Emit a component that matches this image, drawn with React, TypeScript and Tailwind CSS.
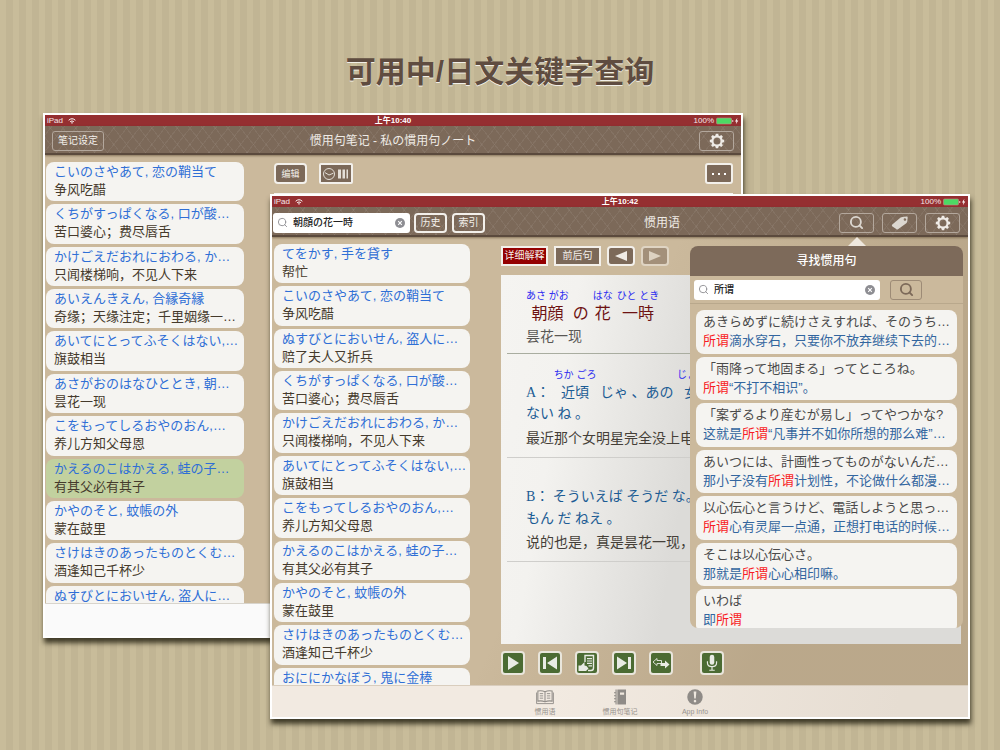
import { FC, ReactNode } from "react"
import clsx from "clsx"
import { Search } from "lucide-react"

const JP = "[font-family:'Liberation_Sans','Noto_Sans_CJK_JP',sans-serif]"
const SC = "[font-family:'Liberation_Sans','Noto_Sans_CJK_SC',sans-serif]"
const SERIF = "[font-family:'Liberation_Serif','Noto_Sans_CJK_JP',serif]"
const KEYWORD = "所谓"

type Idiom = { ja: string; zh: string; selected?: boolean }

const notes: Idiom[] = [
  { ja: "こいのさやあて, 恋の鞘当て", zh: "争风吃醋" },
  { ja: "くちがすっぱくなる, 口が酸…", zh: "苦口婆心；费尽唇舌" },
  { ja: "かけごえだおれにおわる, か…", zh: "只闻楼梯响，不见人下来" },
  { ja: "あいえんきえん, 合縁奇縁", zh: "奇缘；天缘注定；千里姻缘一…" },
  { ja: "あいてにとってふそくはない,…", zh: "旗鼓相当" },
  { ja: "あさがおのはなひととき, 朝…", zh: "昙花一现" },
  { ja: "こをもってしるおやのおん,…", zh: "养儿方知父母恩" },
  { ja: "かえるのこはかえる, 蛙の子…", zh: "有其父必有其子", selected: true },
  { ja: "かやのそと, 蚊帳の外", zh: "蒙在鼓里" },
  { ja: "さけはきのあったものとくむ…", zh: "酒逢知己千杯少" },
  { ja: "ぬすびとにおいせん, 盗人に…", zh: "" },
]

const idioms: Idiom[] = [
  { ja: "てをかす, 手を貸す", zh: "帮忙" },
  { ja: "こいのさやあて, 恋の鞘当て", zh: "争风吃醋" },
  { ja: "ぬすびとにおいせん, 盗人に…", zh: "赔了夫人又折兵" },
  { ja: "くちがすっぱくなる, 口が酸…", zh: "苦口婆心；费尽唇舌" },
  { ja: "かけごえだおれにおわる, か…", zh: "只闻楼梯响，不见人下来" },
  { ja: "あいてにとってふそくはない,…", zh: "旗鼓相当" },
  { ja: "こをもってしるおやのおん,…", zh: "养儿方知父母恩" },
  { ja: "かえるのこはかえる, 蛙の子…", zh: "有其父必有其子" },
  { ja: "かやのそと, 蚊帳の外", zh: "蒙在鼓里" },
  { ja: "さけはきのあったものとくむ…", zh: "酒逢知己千杯少" },
  { ja: "おににかなぼう, 鬼に金棒", zh: "" },
]

const results: Idiom[] = [
  { ja: "あきらめずに続けさえすれば、そのうち…", zh: "所谓滴水穿石，只要你不放弃继续下去的…" },
  { ja: "「雨降って地固まる」ってところね。", zh: "所谓“不打不相识”。" },
  { ja: "「案ずるより産むが易し」ってやつかな?", zh: "这就是所谓“凡事并不如你所想的那么难”…" },
  { ja: "あいつには、計画性ってものがないんだ…", zh: "那小子没有所谓计划性，不论做什么都漫…" },
  { ja: "以心伝心と言うけど、電話しようと思っ…", zh: "所谓心有灵犀一点通，正想打电话的时候…" },
  { ja: "そこは以心伝心さ。", zh: "那就是所谓心心相印嘛。" },
  { ja: "いわば", zh: "即所谓" },
]

const GearIcon: FC = () => (
  <svg viewBox="0 0 16 16" className="size-4" aria-hidden="true">
    <circle cx="8" cy="8" r="4.6" fill="none" stroke="#efebe6" strokeWidth="2.2" />
    {[0, 45, 90, 135, 180, 225, 270, 315].map((deg) => (
      <path key={deg} d="M6.400 3 6.800.8h2.400L9.600 3z" fill="#efebe6" transform={`rotate(${deg} 8 8)`} />
    ))}
  </svg>
)

const TagIcon: FC = () => (
  <svg viewBox="0 0 18 14" className="h-[14px] w-[18px]" aria-hidden="true">
    <path
      fillRule="evenodd"
      fill="#dcd7d0"
      d="M1.3 8.6 9.6 1.6Q10.4 1 11.4.9L15.6.6Q16.8.6 16.7 1.8L16.2 5.6Q16 6.6 15.3 7.2L7 13.3Q6 14 5.2 13L1.1 10.2Q.5 9.3 1.3 8.6zM13.9 2.2a1.3 1.3 0 1 0 .1 2.6 1.3 1.3 0 0 0-.1-2.6z"
    />
  </svg>
)

const StatusBar: FC<{ time: string }> = ({ time }) => (
  <div
    className={clsx(
      "grid h-[11px] shrink-0 grid-cols-[1fr_auto_1fr] items-center bg-[#952f31] px-[2px] text-[8px] leading-[11px] text-white/90",
      SC
    )}
  >
    <span className="flex items-center gap-[5px]">
      iPad
      <svg viewBox="0 0 12 9" className="h-[6px] w-[8px]" aria-hidden="true">
        <path d="M1 3.4a7.4 7.4 0 0 1 10 0M3.2 5.6a4.2 4.2 0 0 1 5.6 0" fill="none" stroke="#fff" strokeWidth="1.5" />
        <path d="M6 8.8 4.4 7.1a2.4 2.4 0 0 1 3.2 0z" fill="#fff" />
      </svg>
    </span>
    <span className="font-bold text-white">{time}</span>
    <span className="flex items-center justify-end gap-[2px]">
      100%
      <svg viewBox="0 0 23 8" className="h-[8px] w-[23px]" aria-hidden="true">
        <rect x=".5" y="1" width="15" height="6" rx="1" fill="#4cd964" stroke="#c98a8a" strokeWidth=".6" />
        <path d="M16.4 3v2q1-.2 1-1t-1-1z" fill="#fff" />
        <path d="M21.4.8 19 4.5h1.5l-.7 2.8 2.5-3.7h-1.5z" fill="#fff" />
      </svg>
    </span>
  </div>
)

const NavBar: FC<{ className?: string; children: ReactNode }> = ({ className, children }) => (
  <header
    className={clsx(
      "shrink-0 border-b-2 border-[#5b4a3d] bg-[#7c6959] bg-[repeating-linear-gradient(52deg,transparent_0_9px,rgba(255,255,255,0.06)_9px_10px),repeating-linear-gradient(-52deg,transparent_0_9px,rgba(255,255,255,0.06)_9px_10px)] shadow-[0_1px_2px_rgba(70,50,30,0.5)]",
      className
    )}
  >
    {children}
  </header>
)

const NavButton: FC<{ label: string; children: ReactNode }> = ({ label, children }) => (
  <button
    type="button"
    aria-label={label}
    className="flex h-5 w-[35px] items-center justify-center rounded-[3px] border border-[#b3a79c]"
  >
    {children}
  </button>
)

const ToolButton: FC<{ className?: string; label?: string; children: ReactNode }> = ({
  className,
  label,
  children,
}) => (
  <button
    type="button"
    aria-label={label}
    className={clsx(
      "flex shrink-0 items-center justify-center border-2 border-[#f3f0eb] leading-4 whitespace-nowrap text-[#f3f0eb]",
      SC,
      className
    )}
  >
    {children}
  </button>
)

const SearchBox: FC<{ id: string; label: string; value: string; className?: string }> = ({
  id,
  label,
  value,
  className,
}) => (
  <div className={clsx("flex h-5 items-center rounded-[3px] bg-white pr-[5px] pl-1", className)}>
    <Search className="size-[11px] shrink-0 text-[#8e8e93]" strokeWidth={2} aria-hidden="true" />
    <label htmlFor={id} className="sr-only">
      {label}
    </label>
    <input
      id={id}
      defaultValue={value}
      className={clsx("ml-[5px] min-w-0 flex-1 text-[10px] leading-4 font-medium text-[#222] outline-none", JP)}
    />
    <button type="button" aria-label="清除">
      <svg viewBox="0 0 10 10" className="size-[10px]" aria-hidden="true">
        <circle cx="5" cy="5" r="5" fill="#8e8e93" />
        <path d="m3.2 3.2 3.6 3.6m0-3.6L3.2 6.8" stroke="#fff" strokeWidth="1.1" />
      </svg>
    </button>
  </div>
)

const IdiomList: FC<{ items: Idiom[] }> = ({ items }) => (
  <ul className="grid h-[463px] auto-rows-fr gap-[3px]">
    {items.map((item) => (
      <li
        key={item.ja}
        className={clsx(
          "overflow-hidden rounded-lg pt-px pl-2 text-[13px] leading-[18px] whitespace-nowrap",
          item.selected ? "bg-[#c2d19f]" : "bg-[#f5f4f1]"
        )}
      >
        <p className={clsx("text-[#2f6fd6]", JP)}>{item.ja}</p>
        <p className={clsx("text-[#453a2c]", SC)}>{item.zh}</p>
      </li>
    ))}
  </ul>
)

const Window: FC<{ className?: string; children: ReactNode }> = ({ className, children }) => (
  <section
    className={clsx(
      "relative flex aspect-[4/3] w-[70%] flex-col overflow-hidden border-2 border-white bg-[#cbb99c] shadow-[1px_5px_5px_rgba(40,36,20,0.85)] [grid-area:1/1]",
      className
    )}
  >
    {children}
  </section>
)

const NotesWindow: FC = () => (
  <Window className="ml-[4.3%]">
    <StatusBar time="上午10:40" />
    <NavBar className="grid h-[29px] grid-cols-[1fr_auto_1fr] items-center px-[7px] pt-[3px]">
      <button
        type="button"
        className={clsx(
          "h-5 w-[52px] rounded-[3px] border border-[#b3a79c] text-[10px] leading-[18px] whitespace-nowrap text-[#f3f0eb]",
          SC
        )}
      >
        笔记设定
      </button>
      <h2 className={clsx("text-[12px] leading-5 text-[#efebe6]", SC)}>惯用句笔记 - 私の慣用句ノート</h2>
      <div className="flex justify-end">
        <NavButton label="设定">
          <GearIcon />
        </NavButton>
      </div>
    </NavBar>
    <div className="flex min-h-0 flex-1 overflow-hidden">
      <div className="w-[199px] shrink-0 pt-[7px] pl-px">
        <IdiomList items={notes} />
      </div>
      <div className="flex flex-1 flex-col pt-2 pr-2 pl-[30px]">
        <div className="flex items-center gap-3">
          <ToolButton className="h-[21px] w-[33px] rounded-[4px] bg-[#7c6959] text-[9px]">编辑</ToolButton>
          <ToolButton label="记忆进度" className="h-[21px] w-[34px] rounded-[2px] bg-[#7c6959]">
            <svg viewBox="0 0 28 14" className="h-[14px] w-[28px]" aria-hidden="true">
              <circle cx="7" cy="7" r="5.5" fill="none" stroke="#e4dfd8" />
              <path d="M3 5.6 7 8l4.4-1.8" fill="none" stroke="#e4dfd8" />
              <path d="M16 2.5h3v9h-3zM20.5 2.5H23v9h-2.500zM24.5 2.5H26v9h-1.500z" fill="#e4dfd8" />
            </svg>
          </ToolButton>
          <ToolButton label="更多" className="ml-auto h-[21px] w-[28px] rounded-[3px] bg-[#7c6959]">
            <svg viewBox="0 0 18 4" className="h-[4px] w-[18px]" aria-hidden="true">
              <path d="M2 1h2v2H2zM8 1h2v2H8zM14 1h2v2h-2z" fill="#fff" />
            </svg>
          </ToolButton>
        </div>
        <div className="mt-[9px] flex-1 bg-[#f7f6f3]" />
      </div>
    </div>
    <div className="h-[33px] shrink-0 border-t border-[#d8d4cc] bg-[#fafafa]" />
  </Window>
)

const Furigana: FC<{ kana: string; children: ReactNode }> = ({ kana, children }) => (
  <span className="inline-block">
    <ruby className="[ruby-align:center]">
      <span className="inline-block leading-[26px]">{children}</span>
      <rt className={clsx("text-[10px] leading-[12px] text-[#2a2af0]", JP)}>{kana}</rt>
    </ruby>
  </span>
)

const DetailPage: FC = () => (
  <article className="mt-[9px] min-h-0 flex-1 overflow-hidden bg-[linear-gradient(100deg,#f5f4f1_0%,#f3f2ef_15%,#dcdbd8_42%,#dcdbd8_100%)] px-[6px] whitespace-nowrap">
    <div className="h-[79px] border-b border-[#a9ada0] pt-[15px] pl-[19px]">
      <p className={clsx("h-[34px] text-[16px] leading-[44px] text-[#6d1212]", SERIF)}>
        <Furigana kana="あさ がお">朝顔</Furigana> の <Furigana kana="はな">花</Furigana>{" "}
        <Furigana kana="ひと とき">一時</Furigana>
      </p>
      <p className={clsx("text-[14px] leading-6 text-[#5a5855]", SC)}>昙花一现</p>
    </div>
    <div className="h-[104px] border-b border-[#cfcecb] pt-[15px] pl-[19px]">
      <p className={clsx("h-9 text-[14px] leading-[44px] text-[#1c5c94]", SERIF)}>
        A： <Furigana kana="ちか ごろ">近頃</Furigana> じゃ 、あの <Furigana kana="じょ ゆう">女優</Furigana>
      </p>
      <p className={clsx("text-[14px] leading-[18px] text-[#1c5c94]", SERIF)}>ない ね 。</p>
      <p className={clsx("pt-[3px] text-[14px] leading-6 text-[#453f38]", SC)}>最近那个女明星完全没上电</p>
    </div>
    <div className="h-[104px] border-b border-[#cfcecb] pt-[28px] pl-[19px]">
      <p className={clsx("text-[14px] leading-[22px] text-[#1c5c94]", SERIF)}>B： そういえば そうだ な。</p>
      <p className={clsx("text-[14px] leading-[22px] text-[#1c5c94]", SERIF)}>もん だ ねえ 。</p>
      <p className={clsx("text-[14px] leading-6 text-[#453f38]", SC)}>说的也是，真是昙花一现，</p>
    </div>
  </article>
)

const players = [
  { label: "播放", icon: <path d="M7 5v14l11-7z" /> },
  { label: "上一句", icon: <path d="M5 6h3v12H5zM19 5.500v13L9 12z" /> },
  {
    label: "朗读",
    icon: (
      <>
        <path
          d="M10 11V4.500h8.500V17q0 2.500-2.500 2.500h-3"
          fill="none"
          stroke="#e8ebe4"
          strokeWidth="1.400"
        />
        <path d="M12 7h5v1.200h-5zM12 9.400h5v1.200h-5zM12 11.800h5V13h-5zM13.500 14.200H17v1.200h-3.500z" />
        <path d="M3.500 14.500H6l3.500-3.500v3.500l2 .5 2 2.500-2.500 2.500H3.500z" />
      </>
    ),
  },
  { label: "下一句", icon: <path d="M5 5.500v13L15 12zM16 6h3v12h-3z" /> },
  {
    label: "切换",
    icon: (
      <>
        <path d="m4 11 4-3.500v2h4.500v3H8v2z" fill="none" stroke="#e8ebe4" strokeWidth=".9" />
        <path d="M11.500 12h4.500V9.500l4.500 4-4.500 4V15h-4.500z" />
      </>
    ),
  },
]

const tabs = [
  {
    label: "惯用语",
    icon: (
      <>
        <path
          d="M12 5Q8 3 2.500 4v13.500q5.500-1 9.500 1 4-2 9.500-1V4Q16 3 12 5zM12 5v13.500"
          fill="none"
          stroke="#8f8b87"
          strokeWidth="1.400"
        />
        <path
          d="M5 7.500h4.500M5 10.500h4.500M5 13.500h4.500M14.500 7.500H19M14.500 10.500H19M14.500 13.500H19M.800 6v14.800h22.400V6"
          fill="none"
          stroke="#8f8b87"
          strokeWidth="1.200"
        />
      </>
    ),
  },
  {
    label: "惯用句笔记",
    icon: (
      <path
        fillRule="evenodd"
        fill="#8f8b87"
        d="M6 2h1.500v20H6v-3H4v-1.500h2v-2.500H4v-1.500h2V11H4V9.500h2V7H4V5.500h2zM8.500 2H20v20H8.500zM12 6v3h5.500V6z"
      />
    ),
  },
  {
    label: "App Info",
    icon: (
      <>
        <circle cx="12" cy="12" r="10.300" fill="#8f8b87" />
        <path d="M10.200 4.500h3.600l-.8 9.500h-2zM12 15.800a1.700 1.700 0 1 0 .01 0z" fill="#eee7df" />
      </>
    ),
  },
]

const SearchPopover: FC = () => (
  <div className="absolute top-[41px] right-[5px] w-[273px]">
    <svg viewBox="0 0 18 9" className="mr-[97px] ml-auto block h-[9px] w-[18px]" aria-hidden="true">
      <path d="M0 9 9 0l9 9z" fill="#efe8de" />
    </svg>
    <div className="h-[382px] overflow-hidden rounded-lg bg-[#cbb99c]">
      <h3 className={clsx("h-[30px] bg-[#7d6a5a] text-center text-[12px] leading-[30px] font-medium text-white", SC)}>
        寻找惯用句
      </h3>
      <div className="flex h-7 items-center border-b border-[#b9a88c] px-1">
        <SearchBox id="phrase-search" label="寻找惯用句" value="所谓" className="w-[186px]" />
        <button
          type="button"
          aria-label="搜索"
          className="ml-[10px] flex h-5 w-8 items-center justify-center rounded-[3px] border border-[#9d8b76] text-[#7c6959]"
        >
          <Search className="size-[15px]" strokeWidth={3} />
        </button>
      </div>
      <ul className="mx-[6px] mt-[6px] grid h-[323px] auto-rows-fr gap-[3px]">
        {results.map((item) => {
          const [before, after] = item.zh.split(KEYWORD)
          return (
            <li
              key={item.ja}
              className="overflow-hidden rounded-lg bg-[#f5f4f1] pt-[2px] pl-[7px] text-[13px] leading-[19px] whitespace-nowrap"
            >
              <p className={clsx("text-[#4a4a4a]", JP)}>{item.ja}</p>
              <p className={clsx("text-[#33669f]", SC)}>
                {before}
                <em className="text-[#f81c24] not-italic">{KEYWORD}</em>
                {after}
              </p>
            </li>
          )
        })}
      </ul>
    </div>
  </div>
)

const IdiomWindow: FC = () => (
  <Window className="mt-[81px] ml-[27%]">
    <StatusBar time="上午10:42" />
    <NavBar className="flex h-[30px] items-center pt-[3px] pr-2 pl-px">
      <SearchBox id="idiom-search" label="搜索惯用语" value="朝顔の花一時" className="w-[137px]" />
      <ToolButton className="ml-1 h-5 w-[33px] rounded-[4px] text-[10px]">历史</ToolButton>
      <ToolButton className="ml-[5px] h-5 w-[33px] rounded-[4px] text-[10px]">索引</ToolButton>
      <h2 className={clsx("flex-1 text-center text-[12px] leading-5 text-[#efebe6]", SC)}>惯用语</h2>
      <div className="flex gap-2">
        <NavButton label="搜索">
          <Search className="size-[15px] text-[#dcd7d0]" strokeWidth={3} />
        </NavButton>
        <NavButton label="标签">
          <TagIcon />
        </NavButton>
        <NavButton label="设定">
          <GearIcon />
        </NavButton>
      </div>
    </NavBar>
    <div className="flex min-h-0 flex-1 overflow-hidden bg-[linear-gradient(115deg,transparent_45%,rgba(120,100,70,0.2)_75%)]">
      <div className="w-[198px] shrink-0 pt-[7px] pl-[2px]">
        <IdiomList items={idioms} />
      </div>
      <div className="flex min-w-0 flex-1 flex-col pt-[9px] pr-[7px] pb-[10px] pl-[31px]">
        <div className="flex gap-[6px]">
          <ToolButton className="h-5 w-[47px] bg-[#940000] text-[10px]">详细解释</ToolButton>
          <ToolButton className="h-5 w-[47px] bg-[#7c6959] text-[10px]">前后句</ToolButton>
          <ToolButton label="上一条" className="h-5 w-[28px] rounded-[4px] bg-[#7c6959]">
            <svg viewBox="0 0 12 10" className="h-[10px] w-[12px]" aria-hidden="true">
              <path d="M0 5 12 0v10z" fill="#efebe6" />
            </svg>
          </ToolButton>
          <ToolButton label="下一条" className="h-5 w-[28px] rounded-[4px] bg-[#7c6959] opacity-50">
            <svg viewBox="0 0 12 10" className="h-[10px] w-[12px]" aria-hidden="true">
              <path d="M12 5 0 0v10z" fill="#efebe6" />
            </svg>
          </ToolButton>
        </div>
        <DetailPage />
        <div className="mt-[7px] flex gap-[13px]">
          {players.map((player) => (
            <button
              key={player.label}
              type="button"
              aria-label={player.label}
              className="size-6 rounded-[4px] border-2 border-[#e9e6dc] bg-[#4b6b33]"
            >
              <svg viewBox="2 2 20 20" className="size-5" fill="#e8ebe4" aria-hidden="true">
                {player.icon}
              </svg>
            </button>
          ))}
          <button
            type="button"
            aria-label="录音"
            className="ml-[14px] size-6 rounded-[4px] border-2 border-[#e9e6dc] bg-[#4b6b33]"
          >
            <svg viewBox="1 2 22 22" className="size-5" aria-hidden="true">
              <rect x="9.500" y="4" width="5" height="11" rx="2.500" fill="#e8ebe4" />
              <path
                d="M7 11v2q0 4 5 4t5-4v-2M12 17v3.500M9 21h6"
                fill="none"
                stroke="#e8ebe4"
                strokeWidth="1.300"
              />
            </svg>
          </button>
        </div>
      </div>
    </div>
    <nav className="flex h-8 shrink-0 justify-center border-t border-[#d9cdbd] bg-[linear-gradient(100deg,#f2eae1_40%,#e6ddd2_90%)]">
      {tabs.map((tab) => (
        <a
          key={tab.label}
          href="#"
          className={clsx("flex w-[75px] flex-col items-center pt-[2px] text-[7px] leading-[8px] text-[#98938e]", SC)}
        >
          <svg viewBox="0 0 24 24" className="mb-[2px] size-[18px]" aria-hidden="true">
            {tab.icon}
          </svg>
          {tab.label}
        </a>
      ))}
    </nav>
    <SearchPopover />
  </Window>
)

const App: FC = () => (
  <main className="min-h-screen bg-[repeating-linear-gradient(90deg,#c8bc9a_0_6px,#c1b594_6px_13px)] pt-[52px] pb-[31px]">
    <h1
      className={clsx(
        "mb-[21px] text-center text-[30px] leading-10 font-bold text-[#5f4c40] [text-shadow:0_1px_0_rgba(255,255,255,0.8)]",
        SC
      )}
    >
      可用中/日文关键字查询
    </h1>
    <div className="grid items-start">
      <NotesWindow />
      <IdiomWindow />
    </div>
  </main>
)

export default App
